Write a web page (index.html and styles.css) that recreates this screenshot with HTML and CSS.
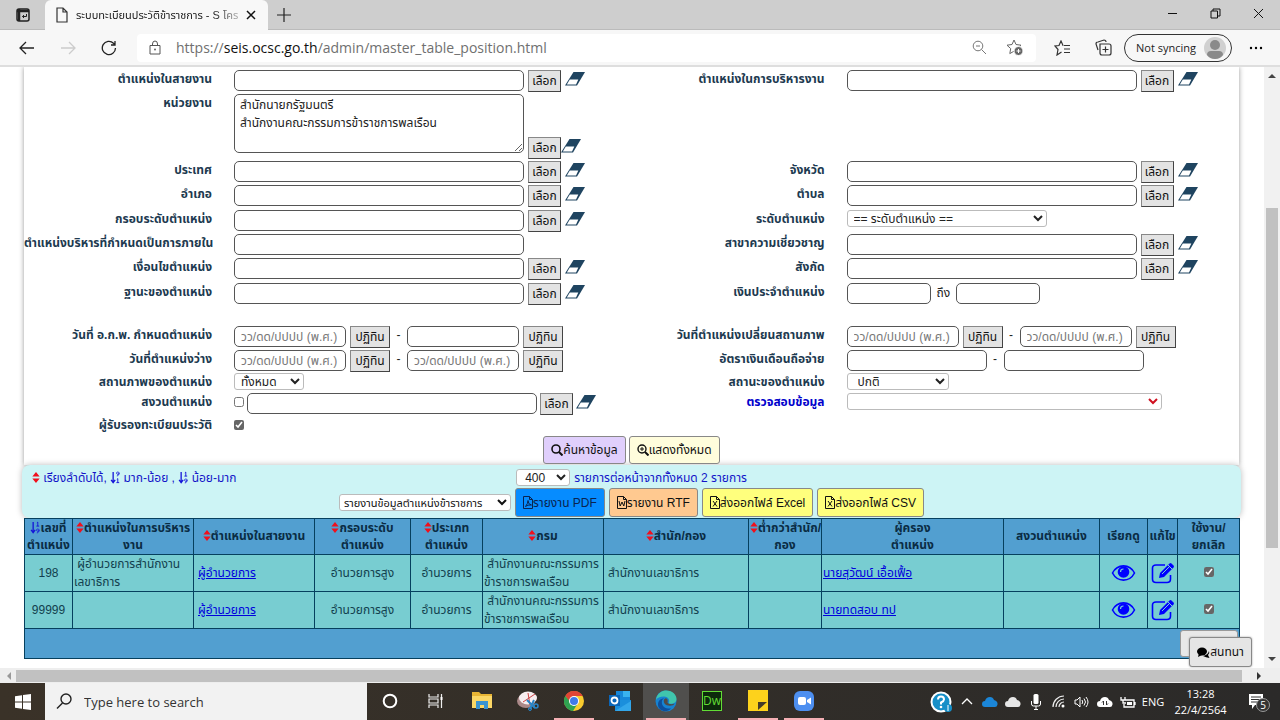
FILE: index.html
```html
<!DOCTYPE html>
<html lang="th">
<head>
<meta charset="utf-8">
<title>ระบบทะเบียนประวัติข้าราชการ</title>
<link rel="stylesheet" href="styles.css">
</head>
<body>
<svg class="defs" aria-hidden="true">
  <symbol id="eraser" viewBox="0 0 20 14"><path d="M8.500 0H20l-8 13.500H0z" fill="#1f4460"/><path d="M4.800 7.500h8.500L11 12.500H1.800z" fill="#fff"/></symbol>
  <symbol id="sort" viewBox="0 0 8 12"><path d="M4 0l4 5H0zM4 12l4-5H0z" fill="#f0101c"/></symbol>
  <symbol id="sortnum" viewBox="0 0 10 14"><path d="M3 1v11M.8 9.500L3 12.500l2.200-3" fill="none" stroke="#1414d8" stroke-width="1.400"/><path d="M7 2l1-.8v4.300M6.500 5.500h3M8 8.500a1.300 1.300 0 1 0 .1 0M9.300 9.800c0 2-.8 2.800-2.300 3" fill="none" stroke="#1414d8"/></symbol>
  <symbol id="sortnumdown" viewBox="0 0 10 14"><path d="M3 1v11M.8 9.500L3 12.500l2.200-3" fill="none" stroke="#1414d8" stroke-width="1.400"/><path d="M8 1a1.300 1.300 0 1 0 .1 0M9.300 2.300c0 2-.8 2.800-2.300 3M7 9l1-.8v4.300M6.500 12.500h3" fill="none" stroke="#1414d8"/></symbol>
  <symbol id="eye" viewBox="0 0 24 18"><path d="M1 9C6-.5 18-.5 23 9 18 18.500 6 18.500 1 9z" fill="none" stroke="#00f" stroke-width="1.600"/><circle cx="12" cy="8" r="5.800" fill="#00f"/><path d="M9 8c0-2 1-3 3-3" fill="none" stroke="#7bcfd3" stroke-width="1.200"/></symbol>
  <symbol id="edit" viewBox="0 0 24 22"><path d="M14 3H5Q1.500 3 1.500 6v11q0 3.500 3.500 3.500h11q3.500 0 3.500-3.500v-4" fill="none" stroke="#00f" stroke-width="1.600"/><path d="M8 16l1-5L18.500 1.500q1-1 2 0l2 2q1 1 0 2L13 15z" fill="#00f"/><path d="M11 12l8-8M17 3l4 4" stroke="#7bcfd3" fill="none"/></symbol>
  <symbol id="file" viewBox="0 0 10 13"><path d="M.5.5h6l3 3v9h-9zM6.500.5v3h3" fill="none" stroke="currentColor"/></symbol>
</svg>

<header class="tabs">
  <button class="tabaction" aria-label="Tab actions"><svg width="14" height="14" viewBox="0 0 14 14"><rect x="1" y="1" width="12" height="12" rx="2" fill="none" stroke="#222" stroke-width="1.500"/><path d="M1 3h12M3 1v12" stroke="#222" stroke-width="2.500"/><path d="M10.500 6v2.500H6.500M8 7L6.500 8.500 8 10" fill="none" stroke="#222"/></svg></button>
  <div class="tab"><svg width="12" height="16" viewBox="0 0 12 16"><path d="M1 1h6l4 4v10H1zM7 1v4h4" fill="none" stroke="#333" stroke-width="1.200"/></svg><span class="tabtitle">ระบบทะเบียนประวัติข้าราชการ - S โคร</span><button aria-label="Close tab"><svg width="10" height="10" viewBox="0 0 10 10"><path d="M1 1l8 8M9 1L1 9" stroke="#111" stroke-width="1.500"/></svg></button></div>
  <button class="newtab" aria-label="New tab"><svg width="14" height="14" viewBox="0 0 14 14"><path d="M7 0v14M0 7h14" stroke="#222" stroke-width="1.200"/></svg></button>
  <div class="wincontrols">
    <button aria-label="Minimize"><svg width="11" height="11" viewBox="0 0 11 11"><path d="M1 5.500h9" stroke="#111"/></svg></button>
    <button aria-label="Restore"><svg width="11" height="11" viewBox="0 0 11 11"><path d="M1 3h6.500v7H1zM3 3V1h7v7H7.500" fill="none" stroke="#111"/></svg></button>
    <button aria-label="Close"><svg width="11" height="11" viewBox="0 0 11 11"><path d="M1 1l9 9M10 1l-9 9" stroke="#111"/></svg></button>
  </div>
</header>

<nav class="toolbar">
  <button aria-label="Back"><svg width="16" height="14" viewBox="0 0 16 14"><path d="M15 7H1M7 1L1 7l6 6" fill="none" stroke="#222" stroke-width="1.300"/></svg></button>
  <button aria-label="Forward"><svg width="16" height="14" viewBox="0 0 16 14"><path d="M1 7h14M9 1l6 6-6 6" fill="none" stroke="#ccc" stroke-width="1.300"/></svg></button>
  <button aria-label="Refresh"><svg width="16" height="16" viewBox="0 0 16 16"><path d="M14.500 8A6.600 6.600 0 1 1 12.500 3.200L14 5M14 1v4h-4" fill="none" stroke="#222" stroke-width="1.300"/></svg></button>
  <div class="address">
    <svg width="12" height="15" viewBox="0 0 12 15"><path d="M1 5.500h10V14H1zM3.500 5.500V4q0-3 2.500-3t2.500 3v1.500" fill="none" stroke="#555"/><circle cx="6" cy="9.500" r=".9" fill="#555"/></svg>
    <span class="url">https://<b>seis.ocsc.go.th</b>/admin/master_table_position.html</span>
    <svg width="15" height="15" viewBox="0 0 15 15"><circle cx="6" cy="6" r="4.800" fill="none" stroke="#777"/><path d="M4 6h4M9.500 9.500L14 14" stroke="#777"/></svg>
    <svg class="addstar" width="18" height="17" viewBox="0 0 18 17"><path d="M8 1l2 4.500 5 .7-3.700 3.400.9 5L8 12.200l-4.200 2.400.9-5L1 6.200l5-.7z" fill="none" stroke="#666"/><circle cx="12.500" cy="12" r="4.500" fill="#666" stroke="#fff"/><path d="M12.500 10v4M10.500 12h4" stroke="#fff"/></svg>
  </div>
  <button aria-label="Favorites"><svg width="17" height="16" viewBox="0 0 17 16"><path d="M9.500 5.500H9L7 1 5 5.500l-4 .5 3 3.500L3 15l4.500-3M10 5.500h6M10 9h6M10 12.500h6" fill="none" stroke="#333" stroke-width="1.200"/></svg></button>
  <button aria-label="Collections"><svg width="17" height="17" viewBox="0 0 17 17"><path d="M3 11L1 5q0-2 2-2l6-2q2 0 2 2M5 5h9q2 0 2 2v7q0 2-2 2H7q-2 0-2-2zM10.500 7.500v6M7.500 10.500h6" fill="none" stroke="#333" stroke-width="1.200"/></svg></button>
  <button class="profile">Not syncing<svg width="22" height="22" viewBox="0 0 22 22"><circle cx="11" cy="11" r="11" fill="#d0d0d0"/><circle cx="11" cy="8" r="5" fill="#8a8a8a"/><path d="M3 18q0-4 4-4h8q4 0 4 4-3 4-8 4t-8-4z" fill="#8a8a8a"/></svg></button>
  <button aria-label="Settings"><svg width="14" height="4" viewBox="0 0 14 4"><circle cx="2" cy="2" r="1.200"/><circle cx="7" cy="2" r="1.200"/><circle cx="12" cy="2" r="1.200"/></svg></button>
</nav>

<div class="viewport">
<main class="page">
<form class="search">
  <div class="row"><label for="f1">ตำแหน่งในสายงาน</label><div class="field"><input class="long" id="f1"><button type="button" class="pick">เลือก</button><svg class="er"><use href="#eraser"/></svg></div><label for="f2">ตำแหน่งในการบริหารงาน</label><div class="field"><input class="long" id="f2"><button type="button" class="pick">เลือก</button><svg class="er"><use href="#eraser"/></svg></div></div>
  <div class="row area"><label for="f3">หน่วยงาน</label><div class="field"><textarea class="long" id="f3">สำนักนายกรัฐมนตรี
สำนักงานคณะกรรมการข้าราชการพลเรือน</textarea><button type="button" class="pick">เลือก</button><svg class="er"><use href="#eraser"/></svg></div></div>
  <div class="row"><label for="f4">ประเทศ</label><div class="field"><input class="long" id="f4"><button type="button" class="pick">เลือก</button><svg class="er"><use href="#eraser"/></svg></div><label for="f5">จังหวัด</label><div class="field"><input class="long" id="f5"><button type="button" class="pick">เลือก</button><svg class="er"><use href="#eraser"/></svg></div></div>
  <div class="row tall"><label for="f6">อำเภอ</label><div class="field"><input class="long" id="f6"><button type="button" class="pick">เลือก</button><svg class="er"><use href="#eraser"/></svg></div><label for="f7">ตำบล</label><div class="field"><input class="long" id="f7"><button type="button" class="pick">เลือก</button><svg class="er"><use href="#eraser"/></svg></div></div>
  <div class="row"><label for="f8">กรอบระดับตำแหน่ง</label><div class="field"><input class="long" id="f8"><button type="button" class="pick">เลือก</button><svg class="er"><use href="#eraser"/></svg></div><label for="f9">ระดับตำแหน่ง</label><div class="field"><select class="level" id="f9"><option>== ระดับตำแหน่ง ==</option></select></div></div>
  <div class="row"><label for="f10">ตำแหน่งบริหารที่กำหนดเป็นการภายใน</label><div class="field"><input class="long" id="f10"></div><label for="f11">สาขาความเชี่ยวชาญ</label><div class="field"><input class="long" id="f11"><button type="button" class="pick">เลือก</button><svg class="er"><use href="#eraser"/></svg></div></div>
  <div class="row tall"><label for="f12">เงื่อนไขตำแหน่ง</label><div class="field"><input class="long" id="f12"><button type="button" class="pick">เลือก</button><svg class="er"><use href="#eraser"/></svg></div><label for="f13">สังกัด</label><div class="field"><input class="long" id="f13"><button type="button" class="pick">เลือก</button><svg class="er"><use href="#eraser"/></svg></div></div>
  <div class="row last"><label for="f14">ฐานะของตำแหน่ง</label><div class="field"><input class="long" id="f14"><button type="button" class="pick">เลือก</button><svg class="er"><use href="#eraser"/></svg></div><label for="f15">เงินประจำตำแหน่ง</label><div class="field"><input class="money" id="f15"><span class="to">ถึง</span><input class="money" aria-label="ถึง"></div></div>
  <div class="row"><label for="f16">วันที่ อ.ก.พ. กำหนดตำแหน่ง</label><div class="field"><input class="date" id="f16" placeholder="วว/ดด/ปปปป (พ.ศ.)"><button type="button" class="cal">ปฏิทิน</button><span class="dash">-</span><input class="date" aria-label="ถึงวันที่"><button type="button" class="cal">ปฏิทิน</button></div><label for="f17">วันที่ตำแหน่งเปลี่ยนสถานภาพ</label><div class="field"><input class="date" id="f17" placeholder="วว/ดด/ปปปป (พ.ศ.)"><button type="button" class="cal">ปฏิทิน</button><span class="dash">-</span><input class="date" aria-label="ถึงวันที่" placeholder="วว/ดด/ปปปป (พ.ศ.)"><button type="button" class="cal">ปฏิทิน</button></div></div>
  <div class="row tight"><label for="f18">วันที่ตำแหน่งว่าง</label><div class="field"><input class="date" id="f18" placeholder="วว/ดด/ปปปป (พ.ศ.)"><button type="button" class="cal">ปฏิทิน</button><span class="dash">-</span><input class="date" aria-label="ถึงวันที่" placeholder="วว/ดด/ปปปป (พ.ศ.)"><button type="button" class="cal">ปฏิทิน</button></div><label for="f19">อัตราเงินเดือนถือจ่าย</label><div class="field"><input class="salary" id="f19"><span class="dash">-</span><input class="salary" aria-label="ถึงอัตรา"></div></div>
  <div class="row short"><label for="f20">สถานภาพของตำแหน่ง</label><div class="field"><select class="state" id="f20"><option>ทั้งหมด</option></select></div><label for="f21">สถานะของตำแหน่ง</label><div class="field"><select class="status" id="f21"><option>ปกติ</option></select></div></div>
  <div class="row tight"><label for="f22">สงวนตำแหน่ง</label><div class="field reserve"><input type="checkbox" id="f22"><input class="long" aria-label="สงวนตำแหน่ง"><button type="button" class="pick">เลือก</button><svg class="er"><use href="#eraser"/></svg></div><label class="blue" for="f23">ตรวจสอบข้อมูล</label><div class="field"><select class="check" id="f23"><option></option></select></div></div>
  <div class="row short"><label for="f24">ผู้รับรองทะเบียนประวัติ</label><div class="field"><input type="checkbox" id="f24" checked></div></div>
  <div class="actions">
    <button type="button" class="btn violet"><svg width="12" height="12" viewBox="0 0 12 12"><circle cx="5" cy="5" r="4" fill="none" stroke="#111" stroke-width="1.600"/><path d="M8 8l3.500 3.500" stroke="#111" stroke-width="2"/></svg>ค้นหาข้อมูล</button>
    <button type="button" class="btn cream"><svg width="12" height="12" viewBox="0 0 12 12"><circle cx="5" cy="5" r="4" fill="none" stroke="#111" stroke-width="1.400"/><path d="M3 5h4M5 3v4" stroke="#111"/><path d="M8 8l3.500 3.500" stroke="#111" stroke-width="2"/></svg>แสดงทั้งหมด</button>
  </div>
</form>

<section class="band">
  <div class="bandtop">
    <p class="legend"><svg class="so"><use href="#sort"/></svg> เรียงลำดับได้, <svg class="sn"><use href="#sortnumdown"/></svg> มาก-น้อย , <svg class="sn"><use href="#sortnum"/></svg> น้อย-มาก</p>
    <div class="count"><select id="per" class="per"><option>400</option></select><label for="per">รายการต่อหน้าจากทั้งหมด 2 รายการ</label></div>
  </div>
  <div class="exports">
    <select class="report" aria-label="รายงาน"><option>รายงานข้อมูลตำแหน่งข้าราชการ</option></select>
    <button class="btn pdf"><svg width="10" height="13"><use href="#file"/><path d="M2.500 10.500q2.500-3 2.500-6 0 4 3.500 4.500-4-.5-6 1.500z" fill="none" stroke="currentColor"/></svg>รายงาน PDF</button>
    <button class="btn rtf"><svg width="10" height="13"><use href="#file"/><path d="M2 5l1.200 5L5 6l1.800 4L8 5" fill="none" stroke="currentColor"/></svg>รายงาน RTF</button>
    <button class="btn yellow"><svg width="10" height="13"><use href="#file"/><path d="M3 5l4 5.500M7 5l-4 5.500" fill="none" stroke="currentColor"/></svg>ส่งออกไฟล์ Excel</button>
    <button class="btn yellow"><svg width="10" height="13"><use href="#file"/><path d="M3 5l4 5.500M7 5l-4 5.500" fill="none" stroke="currentColor"/></svg>ส่งออกไฟล์ CSV</button>
  </div>
</section>

<table class="grid">
  <colgroup><col class="c48"><col class="c121"><col class="c121"><col class="c96"><col class="c72"><col class="c121"><col class="c145"><col class="c73"><col class="c182"><col class="c96"><col class="c48"><col class="c30"><col class="c62"></colgroup>
  <thead><tr>
    <th><svg class="sn"><use href="#sortnum"/></svg>เลขที่<br>ตำแหน่ง</th><th><svg class="so"><use href="#sort"/></svg>ตำแหน่งในการบริหาร<br>งาน</th><th><svg class="so"><use href="#sort"/></svg>ตำแหน่งในสายงาน</th><th><svg class="so"><use href="#sort"/></svg>กรอบระดับ<br>ตำแหน่ง</th><th><svg class="so"><use href="#sort"/></svg>ประเภท<br>ตำแหน่ง</th><th><svg class="so"><use href="#sort"/></svg>กรม</th><th><svg class="so"><use href="#sort"/></svg>สำนัก/กอง</th><th><svg class="so"><use href="#sort"/></svg>ต่ำกว่าสำนัก/<br>กอง</th><th>ผู้ครอง<br>ตำแหน่ง</th><th>สงวนตำแหน่ง</th><th>เรียกดู</th><th>แก้ไข</th><th>ใช้งาน/<br>ยกเลิก</th>
  </tr></thead>
  <tbody>
  <tr><td class="num">198</td><td>&nbsp;ผู้อำนวยการสำนักงาน<br>เลขาธิการ</td><td class="in"><a href="#">ผู้อำนวยการ</a></td><td class="mid">อำนวยการสูง</td><td class="mid">อำนวยการ</td><td>&nbsp;สำนักงานคณะกรรมการ<br>ข้าราชการพลเรือน</td><td class="in">สำนักงานเลขาธิการ</td><td></td><td><a href="#">นายสุวัฒน์ เอื้อเฟื้อ</a></td><td></td><td class="mid"><svg class="eye"><use href="#eye"/></svg></td><td class="mid"><svg class="edit"><use href="#edit"/></svg></td><td class="mid"><input type="checkbox" checked aria-label="ใช้งาน 198"></td></tr>
  <tr><td class="num">99999</td><td></td><td class="in"><a href="#">ผู้อำนวยการ</a></td><td class="mid">อำนวยการสูง</td><td class="mid">อำนวยการ</td><td>&nbsp;สำนักงานคณะกรรมการ<br>ข้าราชการพลเรือน</td><td class="in">สำนักงานเลขาธิการ</td><td></td><td><a href="#">นายทดสอบ ทป</a></td><td></td><td class="mid"><svg class="eye"><use href="#eye"/></svg></td><td class="mid"><svg class="edit"><use href="#edit"/></svg></td><td class="mid"><input type="checkbox" checked aria-label="ใช้งาน 99999"></td></tr>
  </tbody>
  <tfoot><tr><td colspan="13"><button class="blank" aria-label="บันทึก"></button></td></tr></tfoot>
</table>
</main>
<div class="vbar"><svg width="8" height="5" viewBox="0 0 8 5"><path d="M0 5l4-4 4 4z" fill="#444"/></svg><i></i><svg width="8" height="5" viewBox="0 0 8 5"><path d="M0 0l4 4 4-4z" fill="#444"/></svg></div>
<button class="btn chat"><svg width="13" height="11" viewBox="0 0 13 11"><ellipse cx="5" cy="4.500" rx="5" ry="4"/><path d="M1 10l1-4 3 2zM12.500 11l-1.500-3q2-2 1-4-1 4-6 5 3 1.500 6.500 2z"/></svg>สนทนา</button>
</div>
<div class="hbar"><svg width="5" height="8" viewBox="0 0 5 8"><path d="M5 0L1 4l4 4z" fill="#999"/></svg><i></i><svg width="5" height="8" viewBox="0 0 5 8"><path d="M0 0l4 4-4 4z" fill="#333"/></svg></div>

<footer class="taskbar">
  <button class="start" aria-label="Start"><svg width="16" height="16" viewBox="0 0 16 16"><path d="M0 2.300l7-1v6.200H0zM8 1.100L16 0v7.500H8zM0 8.500h7v6.200l-7-1zM8 8.500h8V16l-8-1.100z" fill="#fff"/></svg></button>
  <label class="find"><svg width="17" height="17" viewBox="0 0 17 17"><circle cx="10" cy="6" r="5" fill="none" stroke="#222" stroke-width="1.400"/><path d="M6.500 10L1 15.500" stroke="#222" stroke-width="1.400"/></svg><input placeholder="Type here to search" aria-label="Type here to search"></label>
  <div class="apps">
    <button aria-label="Cortana"><svg width="16" height="16"><circle cx="8" cy="8" r="6.300" fill="none" stroke="#fff" stroke-width="2"/></svg></button>
    <button aria-label="Task view"><svg width="16" height="16" viewBox="0 0 16 16"><path d="M1 1v3h9V1M1 15v-3h9v3M1 6h9v4H1zM13.500 1v14" fill="none" stroke="#eee" stroke-width="1.200"/><path d="M12.500 4h2v3h-2z" fill="#fff"/></svg></button>
    <button aria-label="File Explorer"><svg width="20" height="19" viewBox="0 0 20 19"><path d="M0 1h7l2 2h11v14H0z" fill="#e8b535"/><path d="M0 5h20v12H0z" fill="#fbd766"/><path d="M4 18v-8h12v8h-4v-4H8v4z" fill="#3a94d1"/></svg></button>
    <button aria-label="Snip"><svg width="22" height="20" viewBox="0 0 22 20"><ellipse cx="9" cy="10" rx="9" ry="7" fill="#a88"/><ellipse cx="11" cy="7" rx="9" ry="6.500" fill="#f7eef0"/><path d="M6 11L18 3M11 2l2 12" stroke="#c44"/><path d="M10 9l8 8M17 9l-4 9" stroke="#2a86c8" stroke-width="2"/><circle cx="19" cy="15" r="2" fill="none" stroke="#2a86c8" stroke-width="1.500"/><circle cx="13" cy="18" r="1.500" fill="none" stroke="#2a86c8"/></svg></button>
    <button class="open" aria-label="Chrome"><svg width="20" height="20" viewBox="0 0 20 20"><circle cx="10" cy="10" r="10" fill="#f9cb2e"/><path d="M1.300 5A10 10 0 0 1 18.700 5H10L6 12z" fill="#e04535"/><path d="M1.300 5A10 10 0 0 0 9 20l5-8-6 1z" fill="#2fa351"/><circle cx="10" cy="10" r="5" fill="#fff"/><circle cx="10" cy="10" r="4" fill="#3f7be8"/></svg></button>
    <button aria-label="Outlook"><svg width="22" height="20" viewBox="0 0 22 20"><path d="M7 0h14v10H7z" fill="#1687d9"/><path d="M14 0h7v6h-7z" fill="#39b2ef"/><path d="M6 9h16v11H6z" fill="#1b8fdc"/><path d="M6 20L22 10v10z" fill="#33a7ea"/><path d="M0 4h11v11H0z" fill="#0b66b8"/><circle cx="5.500" cy="9.500" r="3" fill="none" stroke="#fff" stroke-width="1.800"/></svg></button>
    <button class="open active" aria-label="Edge"><svg width="22" height="22" viewBox="0 0 22 22"><circle cx="11" cy="11" r="10.500" fill="#1683d2"/><path d="M1 10C2 3 7 .5 11 .5c7 0 11 5 10.500 9-.5 4-5 5-8 4 2-3 0-7-4.500-7C5 6.500 2 8 1 10z" fill="#40c5ad"/><path d="M7 11c-1 5 3 8 9 7.500-5 5-13 2-13-4 0-4 3-6 6-6-1 .5-2 1.500-2 2.500z" fill="#0d4f9c"/><path d="M9.500 9c2-2 4 1 3 3.500 1 2 5 2 7 1-1 3-8 3-10 0-1-2-1-3 0-4.500z" fill="#504b46"/></svg></button>
    <button aria-label="Dreamweaver"><span class="dw">Dw</span></button>
    <button class="open" aria-label="Sticky Notes"><svg width="20" height="21" viewBox="0 0 20 21"><path d="M0 0h20v21H0z" fill="#fdd21c"/><path d="M10 20v-8h9z" fill="#443b28"/></svg></button>
    <button class="open" aria-label="Zoom"><svg width="20" height="20" viewBox="0 0 20 20"><rect width="20" height="20" rx="6" fill="#4d8ff0"/><rect x="4" y="6" width="8" height="8" rx="2" fill="#fff"/><path d="M13 9l4-2.500v7L13 11z" fill="#fff"/></svg></button>
  </div>
  <div class="tray">
    <span class="help"><svg width="22" height="22" viewBox="0 0 22 22"><circle cx="11" cy="11" r="9.500" fill="#168fc8" stroke="#fff" stroke-width="2"/><path d="M8 8.500Q8 5.500 11 5.500t3 3q0 1.500-3 3v2" fill="none" stroke="#fff" stroke-width="2"/><circle cx="11" cy="16" r="1.300" fill="#fff"/><circle cx="18" cy="17" r="4" fill="#168fc8"/><path d="M18 14v6" stroke="#fff"/></svg></span>
    <span><svg width="12" height="7"><path d="M1 6l5-5 5 5" fill="none" stroke="#fff" stroke-width="1.300"/></svg></span>
    <span><svg width="16" height="11" viewBox="0 0 16 11"><path d="M3 11a3 3 0 0 1 0-6q1-4 5-4 3 0 4 3 4 1 3.500 4.500Q15 11 13 11z" fill="#1b86d8"/></svg></span>
    <span><svg width="16" height="11" viewBox="0 0 16 11"><path d="M3 11a3 3 0 0 1 0-6q1-4 5-4 3 0 4 3 4 1 3.500 4.500Q15 11 13 11z" fill="#e6e6e6"/></svg></span>
    <span><svg width="10" height="16" viewBox="0 0 10 16"><rect x="2.500" width="5" height="10" rx="1.500" fill="#fff"/><path d="M.5 7v3q0 2 2 2h5q2 0 2-2V7M5 12v3M3 15.500h4" fill="none" stroke="#fff"/></svg></span>
    <span><svg width="13" height="13" viewBox="0 0 13 13"><path d="M1 12A11 11 0 0 1 12 1M4 12a8 8 0 0 1 8-8M7 12a5 5 0 0 1 5-5" fill="none" stroke="#eee" stroke-width="1.200"/><circle cx="11" cy="11" r="1.500" fill="#fff"/></svg></span>
    <span><svg width="15" height="12" viewBox="0 0 15 12"><path d="M1 4h2l3-3v10L3 8H1zM8 4q1.500 2 0 4M10 2.500q3 3.500 0 7M12 1q4 5 0 10" fill="none" stroke="#fff"/></svg></span>
    <span><svg width="16" height="12" viewBox="0 0 16 12"><path d="M3 11a3 3 0 0 1 0-6q1-4 5-4 3 0 4 3 4 1 3.500 4.500Q15 11 13 11z" fill="#fff"/><path d="M6.500 9V5L5 6.500M9.500 5v4L11 7.500" fill="none" stroke="#333"/></svg></span>
    <span><svg width="16" height="12" viewBox="0 0 16 12"><path d="M5 4h9v7H4V8M1 1v3h4V1M3 4v3h3M15 6v3" fill="none" stroke="#fff" stroke-width="1.300"/><path d="M7 6h5v3H7z" fill="#fff"/></svg></span>
    <span class="lang">ENG</span>
    <time class="clock">13:28<br>22/4/2564</time>
    <span class="notify"><svg width="18" height="17" viewBox="0 0 18 17"><path d="M1 1h14v11H7l-3 4v-4H1z" fill="#fff"/><path d="M3 4h10M3 6.500h10M3 9h7" stroke="#333"/></svg><b>5</b></span>
  </div>
</footer>
</body>
</html>
```
FILE: styles.css
```css
* { box-sizing: border-box; }
body {
  margin: 0; height: 100vh; display: flex; flex-direction: column; overflow: hidden;
  background: #fff; color: #222;
  font: 12px/18px "Liberation Sans", "Noto Sans Thai", sans-serif;
}
button, input, select, textarea { font: inherit; color: inherit; margin: 0; }
button { padding: 0; border: 0; background: none; display: flex; align-items: center; justify-content: center; }
svg { flex: none; }
.defs { position: absolute; width: 0; height: 0; }

.tabs { display: flex; height: 30px; flex: none; background: #cecece; border-bottom: 1px solid #bbb; }
.tabaction { width: 45px; }
.tab { display: flex; align-items: center; gap: 8px; height: 30px; padding: 0 12px 0 11px; background: #f8f8f8; border-radius: 6px 6px 0 0; }
.tabtitle { white-space: nowrap; font-size: 11px; -webkit-mask-image: linear-gradient(90deg, #000 85%, #0005); }
.newtab { width: 32px; }
.wincontrols { margin-left: auto; display: flex; }
.wincontrols button { width: 43px; height: 27px; }

.toolbar { display: flex; flex: none; align-items: center; height: 37px; padding-left: 6px; background: #f7f7f7; border-bottom: 2px solid #dedede; font-family: "Open Sans", sans-serif; }
.toolbar > button { width: 41px; height: 28px; }
.address { flex: 1; display: flex; align-items: center; gap: 15px; height: 28px; margin: 0 6px 0 8px; padding: 0 12px; background: #fff; border-radius: 4px; }
.url { flex: 1; font-size: 14px; color: #707070; }
.url b { font-weight: 400; color: #111; }
.addstar { margin-left: 4px; }
.toolbar > .profile { width: 108px; gap: 8px; padding-left: 6px; border: 1px solid #333; border-radius: 14px; font-size: 11px; }
.toolbar > .profile + button { width: 48px; }

.viewport { flex: 1; min-height: 0; display: flex; position: relative; overflow: hidden; }
.page { flex: 1; min-width: 0; margin: 0 25px 0 24px; }
.search { padding-top: 3px; box-shadow: 0 0 5px #999; }
.row { display: grid; grid-template-columns: 188px 381fr 188px 393fr; column-gap: 22px; height: 24px; }
.row.tall { height: 25px; }
.row.tight { height: 23px; }
.row.short { height: 20px; }
.row.area { height: 67px; }
.row.last { height: 43px; }
.row label { text-align: right; white-space: nowrap; font-weight: 700; line-height: 18px; color: #1d3a50; }
.row label.blue { color: #00c; }
.field { display: flex; align-items: flex-start; gap: 4px; white-space: nowrap; }
.field input:not([type=checkbox]), textarea { height: 21px; padding: 0 6px; border: 1px solid #555; border-radius: 5px; background: #fff; }
.field .long { width: 290px; }
.field textarea { height: 59px; padding: 1px 5px; }
.area .field { align-items: flex-end; height: 65px; }
.area .field textarea { align-self: flex-start; }
.field .money { width: 84px; }
.field .date { width: 112px; padding: 0 5px; }
.field .salary { width: 140px; }
.field ::placeholder { color: #777; }
.pick, .cal { width: 33px; height: 22px; background: #e3e3e3; border: 1px solid #888; border-right-color: #444; border-bottom-color: #444; color: #111; }
.cal { width: 40px; }
.to { padding: 0 2px; line-height: 20px; }
.dash { width: 9px; text-align: center; }
.er { width: 20px; height: 14px; margin-top: 2px; }
.area .er { margin: 0 0 6px -4px; }
input[type=checkbox] { width: 10px; height: 10px; margin: 4px 0 0; accent-color: #666; flex: none; }
.reserve { gap: 3px; }
select { height: 17px; padding: 0 2px; background: #fff; border: 1px solid #bbb; border-radius: 3px; line-height: 14px; }
.level { width: 200px; }
.state { width: 70px; }
.status { width: 102px; padding: 0 6px; }
.field .check { width: 315px; color: #d01020; }
.actions { display: flex; justify-content: center; gap: 3px; padding-bottom: 1px; }
.btn { height: 28px; gap: 0; padding: 0 7px; border: 1px solid #888; border-radius: 3px; color: #111; white-space: nowrap; }
.violet { background: #e0cffc; }
.cream { background: #fffddc; }

.band { height: 53px; margin: 0 -2px; padding-top: 4px; background: #cdf4f5; border-radius: 8px; box-shadow: 0 0 6px #bbb; }
.bandtop { display: grid; grid-template-columns: 1fr auto 1fr; height: 19px; color: #1414c8; }
.legend { margin: 0; padding-left: 10px; }
.count { display: flex; gap: 4px; }
.per { width: 54px; color: #222; padding: 0 4px; }
.exports { display: flex; justify-content: center; align-items: center; gap: 4px; }
.exports .btn { height: 29px; }
.report { width: 172px; padding: 0; font-size: 11px; color: #111; }
.pdf { background: #068cff; color: #0a2450; }
.rtf { background: #ffc990; }
.yellow { background: #ffff7d; }
.so { width: 8px; height: 11px; vertical-align: -1px; }
.sn { width: 10px; height: 13px; vertical-align: -2px; }

.grid { width: 100%; table-layout: fixed; border-collapse: collapse; color: #123f4e; }
.grid th, .grid td { border: 1px solid #06405e; padding: 0 1px; white-space: nowrap; }
.grid th { height: 36px; background: #529fd0; line-height: 17px; color: #0a2c44; }
.grid tbody td { height: 37px; background: #78cdd1; }
.grid .mid, .grid .num { text-align: center; }
.grid .in { padding-left: 4px; }
.grid a { color: #00d; }
.grid svg.eye { width: 25px; height: 18px; display: block; margin: auto; }
.grid svg.edit { width: 24px; height: 22px; display: block; margin: auto; }
.grid td input[type=checkbox] { margin: 0; }
.grid tfoot td { height: 30px; background: #529fd0; }
.blank { width: 58px; height: 27px; margin-left: auto; background: #e8e8e8; border: 1px solid #999; border-radius: 3px; }
.c30 { width: 30px; } .c48 { width: 48px; } .c62 { width: 62px; } .c72 { width: 72px; } .c73 { width: 73px; }
.c96 { width: 96px; } .c121 { width: 121px; } .c145 { width: 145px; } .c182 { width: 182px; }
.chat { position: absolute; right: 28px; bottom: 1px; height: 30px; background: #e5e5e5; box-shadow: 0 0 2px #999; }

.vbar { width: 16px; display: flex; flex-direction: column; align-items: center; padding: 6px 0; background: #f1f1f1; }
.vbar i { width: 12px; height: 340px; margin: 130px 0 auto; background: #c1c1c1; }
.hbar { flex: none; display: flex; align-items: center; gap: 5px; height: 15px; padding: 0 18px 0 6px; background: #eee; }
.hbar i { flex: 1; height: 12px; margin-right: 10px; background: #c1c1c1; }

.taskbar { flex: none; display: flex; height: 37px; background: linear-gradient(90deg, #3a3228, #2b2a29); color: #fff; font-family: "Open Sans", sans-serif; }
.start { width: 45px; }
.find { display: flex; align-items: center; gap: 9px; width: 322px; padding-left: 11px; background: #f2f2f2; }
.find input { flex: 1; border: 0; background: none; font-size: 13px; }
.find ::placeholder { color: #333; }
.apps { display: flex; }
.apps button { width: 46px; border-bottom: 2px solid transparent; }
.apps .open { border-image: linear-gradient(90deg, transparent 10%, #f4afb4 10%, #f4afb4 90%, transparent 90%) 2; }
.apps .active { background: #504f4d; }
.dw { width: 20px; height: 20px; border: 1px solid #62dd35; background: #0d2b0c; color: #62dd35; font-size: 12px; }
.tray { display: flex; align-items: center; margin-left: auto; }
.tray span { width: 23px; display: flex; justify-content: center; }
.tray .help { width: 28px; }
.tray .lang { width: 28px; font-size: 11px; }
.clock { width: 67px; text-align: center; font-size: 11px; line-height: 16px; }
.tray .notify { width: 46px; position: relative; }
.notify b { position: absolute; left: 22px; top: 5px; width: 14px; height: 14px; border: 1px solid #999; border-radius: 7px; background: #333; font: 10px/12px "Open Sans", sans-serif; text-align: center; }
```
